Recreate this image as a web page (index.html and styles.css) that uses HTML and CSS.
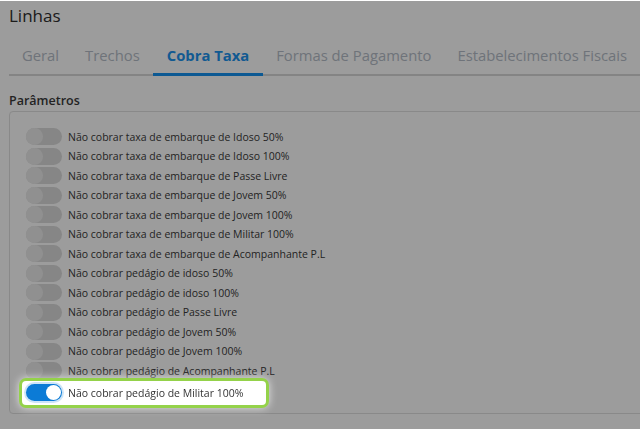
FILE: index.html
```html
<!DOCTYPE html>
<html lang="pt-BR">

<head>
  <meta charset="UTF-8">
  <meta name="viewport" content="width=device-width, initial-scale=1.0">
  <title>Linhas</title>
  <link rel="stylesheet" href="styles.css">
</head>

<body>
  <h1 class="page-title">Linhas</h1>

  <ul class="tabs">
    <li class="tab">Geral</li>
    <li class="tab">Trechos</li>
    <li class="tab active">Cobra Taxa</li>
    <li class="tab">Formas de Pagamento</li>
    <li class="tab">Estabelecimentos Fiscais</li>
  </ul>

  <h2 class="section-title">Parâmetros</h2>
  <div class="params">
    <label class="param"><span class="switch"></span>Não cobrar taxa de embarque de Idoso 50%</label>
    <label class="param"><span class="switch"></span>Não cobrar taxa de embarque de Idoso 100%</label>
    <label class="param"><span class="switch"></span>Não cobrar taxa de embarque de Passe Livre</label>
    <label class="param"><span class="switch"></span>Não cobrar taxa de embarque de Jovem 50%</label>
    <label class="param"><span class="switch"></span>Não cobrar taxa de embarque de Jovem 100%</label>
    <label class="param"><span class="switch"></span>Não cobrar taxa de embarque de Militar 100%</label>
    <label class="param"><span class="switch"></span>Não cobrar taxa de embarque de Acompanhante P.L</label>
    <label class="param"><span class="switch"></span>Não cobrar pedágio de idoso 50%</label>
    <label class="param"><span class="switch"></span>Não cobrar pedágio de idoso 100%</label>
    <label class="param"><span class="switch"></span>Não cobrar pedágio de Passe Livre</label>
    <label class="param"><span class="switch"></span>Não cobrar pedágio de Jovem 50%</label>
    <label class="param"><span class="switch"></span>Não cobrar pedágio de Jovem 100%</label>
    <label class="param"><span class="switch"></span>Não cobrar pedágio de Acompanhante P.L</label>
    <label class="param highlight"><span class="switch on"></span>Não cobrar pedágio de Militar 100%</label>
  </div>

  <!-- fundo escuro do tour -->
  <div class="backdrop"></div>
</body>

</html>
```

FILE: styles.css
```css
html,
body {
  overflow: hidden;
}

body {
  font-family: "Open Sans", Arial, sans-serif;
  background-color: #fff;
  color: #333;
  margin: 0;
  padding: 0 0 0 9px;
  height: 429px;
}

.page-title {
  margin: 0;
  padding-top: 4px;
  font-size: 17px;
  font-weight: normal;
  line-height: 24px;
  color: #2e2e2e;
}

.tabs {
  display: flex;
  list-style: none;
  margin: 15px -20px 0 0;
  padding: 0;
  border-bottom: 2px solid #d8d8d8;
}

.tab {
  padding: 0 13px 6px;
  font-size: 14.8px;
  line-height: 24px;
  color: #b5bdc8;
  border-bottom: 3px solid transparent;
  margin-bottom: -2px;
}

.tab.active {
  padding: 0 14px 6px;
  color: #1d93ee;
  font-weight: bold;
  border-bottom-color: #1592f0;
}

.section-title {
  margin: 16px 0 0;
  font-size: 12.5px;
  font-weight: 600;
  line-height: 18px;
  color: #3a3a3a;
}

.params {
  display: flex;
  flex-direction: column;
  align-items: flex-start;
  margin: 1px -20px 0 0;
  padding: 15px 16px 8px;
  border: 1px solid #e0e0e0;
  border-radius: 4px;
}

.param {
  display: flex;
  align-items: center;
  gap: 6px;
  height: 19.5px;
  font-size: 10.5px;
  color: #3a3a3a;
}

.switch {
  position: relative;
  width: 36px;
  height: 17px;
  border-radius: 9px;
  background-color: #dcdcdc;
}

.switch::after {
  content: "";
  position: absolute;
  top: 0;
  left: 0;
  width: 17px;
  height: 17px;
  border-radius: 50%;
  background-color: #ececec;
}

.switch.on {
  background-color: #0b7bd6;
  box-shadow: 0 0 0 2px rgba(11, 123, 214, 0.2);
}

.switch.on::after {
  left: auto;
  right: 1px;
  top: 1px;
  width: 15px;
  height: 15px;
  background-color: #fff;
}

.highlight {
  position: relative;
  z-index: 2;
  height: 24px;
  margin: 0 0 0 -4px;
  padding: 0 23px 0 4px;
  background-color: #fff;
  border-radius: 4px;
  color: #333;
  box-shadow: 0 0 0 3px #94d24a, 0 0 8px 3px rgba(255, 255, 255, 0.7);
}

.backdrop {
  position: fixed;
  top: 1px;
  left: 0;
  right: 0;
  bottom: 0;
  z-index: 1;
  background-color: rgba(0, 0, 0, 0.39);
}
```
